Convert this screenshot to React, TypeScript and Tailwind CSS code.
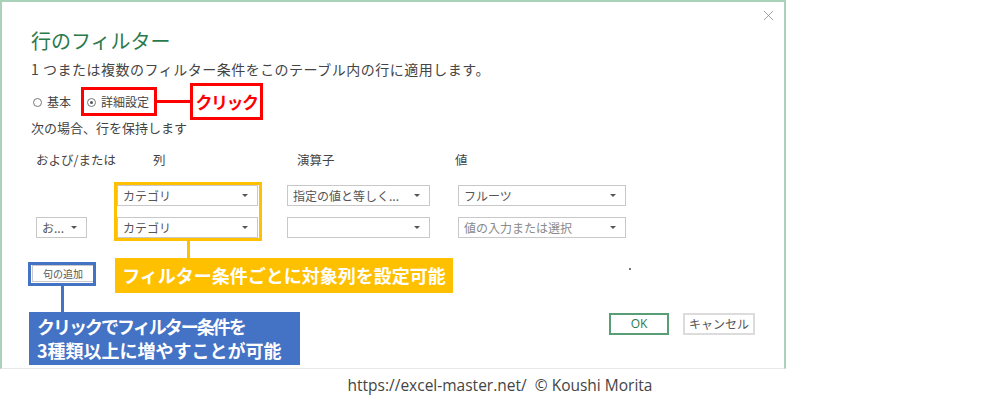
import { X } from 'lucide-react';

const jp = { fontFamily: '"Noto Sans CJK JP", "Noto Sans", sans-serif' };

const Caret = () => (
  <span className="w-0 h-0 border-l-[3px] border-r-[3px] border-t-[3px] border-l-transparent border-r-transparent border-t-[#555]" />
);

const Select = ({ text, width, muted }: { text?: string; width: string; muted?: boolean }) => (
  <div className={`${width} h-[21px] border border-[#c8c8c8] bg-white flex items-center justify-between pl-[5px] pr-[9px] text-[12px] ${muted ? 'text-[#8a8a8a]' : 'text-[#555]'}`}>
    <span className="leading-none whitespace-nowrap">{text}</span>
    <Caret />
  </div>
);

const Radio = ({ label, checked }: { label: string; checked?: boolean }) => (
  <div className="flex items-center gap-[5px]">
    <span className="w-[9px] h-[9px] rounded-full border border-[#777] flex items-center justify-center">
      {checked && <span className="w-[3px] h-[3px] rounded-full bg-[#555]" />}
    </span>
    <span>{label}</span>
  </div>
);

const App = () => {
  return (
    <div className="relative w-[1000px] h-[398px] bg-white text-[#444]" style={jp}>
      {/* dialog */}
      <div className="w-[786px] h-[369px] border-t-2 border-l-2 border-r-2 border-[#a9d3b9] border-b border-b-[#e8e8e8] flex flex-col">
        <div className="flex justify-end pr-[7px] pt-[5px] h-[14px]">
          <X className="w-[17px] h-[17px] text-[#888]" strokeWidth={1.1} />
        </div>
        <div className="pl-[29px] flex flex-col">
          <div className="mt-[11px] text-[20px] leading-[28px] text-[#2b7a4b]">行のフィルター</div>
          <div className="mt-[4px] text-[14px] leading-[20px] tracking-[0.5px]">1 つまたは複数のフィルター条件をこのテーブル内の行に適用します。</div>
          <div className="mt-[13px] flex items-center gap-[16px] text-[12px] leading-[20px] pl-[2px]">
            <Radio label="基本" />
            <Radio label="詳細設定" checked />
          </div>
          <div className="mt-[6px] text-[13px] leading-[20px]">次の場合、行を保持します</div>

          <div className="mt-[12px] grid grid-cols-[81px_170px_171px_1fr] pl-[5px] text-[12.5px] leading-[20px]">
            <div>および/または</div>
            <div className="pl-[36px]">列</div>
            <div className="pl-[10px]">演算子</div>
            <div className="-ml-[3px]">値</div>
          </div>

          <div className="mt-[15px] grid grid-cols-[81px_170px_171px_1fr] pl-[5px]">
            <div />
            <Select text="カテゴリ" width="w-[141px]" />
            <Select text="指定の値と等しく..." width="w-[143px]" />
            <Select text="フルーツ" width="w-[168px]" />
          </div>
          <div className="mt-[11px] grid grid-cols-[81px_170px_171px_1fr] pl-[5px]">
            <Select text="お..." width="w-[51px]" />
            <Select text="カテゴリ" width="w-[141px]" />
            <Select width="w-[143px]" />
            <Select text="値の入力または選択" width="w-[168px]" muted />
          </div>

          <div className="mt-[27px] flex items-start">
            <div className="ml-[1px] w-[62px] h-[17px] border border-[#c8c8c8] flex items-center justify-center text-[10px] text-[#555]">句の追加</div>
            <span className="ml-[535px] mt-[3px] w-[2px] h-[2px] bg-[#777]" />
          </div>

          <div className="mt-[31px] flex justify-end gap-[14px] pr-[29px]">
            <div className="w-[60px] h-[22px] border-2 border-[#5a9e78] flex items-center justify-center text-[12px] text-[#2b7a4b]" style={{ fontFamily: '"Open Sans", sans-serif' }}>OK</div>
            <div className="w-[72px] h-[22px] border-2 border-[#dcdcdc] flex items-center justify-center text-[12px] text-[#555]">キャンセル</div>
          </div>
        </div>
      </div>

      {/* footer */}
      <div className="flex justify-center pt-[6px] text-[15.5px] text-[#444] leading-[20px]" style={{ fontFamily: '"Open Sans", sans-serif' }}>
        https://excel-master.net/&nbsp;&nbsp;© Koushi Morita
      </div>

      {/* annotation: click */}
      <div className="absolute left-[81px] top-[87px] w-[76px] h-[29px] border-[3px] border-[#ff0000]" />
      <div className="absolute left-[157px] top-[100px] w-[33px] h-[3px] bg-[#ff0000]" />
      <div className="absolute left-[190px] top-[83px] w-[73px] h-[37px] border-[3px] border-[#ff0000] bg-white flex items-center justify-center text-[17px] font-bold text-[#ff0000] tracking-[-1.5px]">クリック</div>

      {/* annotation: yellow */}
      <div className="absolute left-[114px] top-[182px] w-[148px] h-[59px] border-[3px] border-[#ffc000]" />
      <div className="absolute left-[187px] top-[241px] w-[3px] h-[17px] bg-[#ffc000]" />
      <div className="absolute left-[115px] top-[258px] w-[338px] h-[35px] bg-[#ffc000] flex items-center justify-center text-[18px] font-bold text-white">フィルター条件ごとに対象列を設定可能</div>

      {/* annotation: blue */}
      <div className="absolute left-[28px] top-[262px] w-[68px] h-[24px] border-[3px] border-[#4472c4]" />
      <div className="absolute left-[61px] top-[286px] w-[3px] h-[26px] bg-[#4472c4]" />
      <div className="absolute left-[29px] top-[312px] w-[271px] h-[53px] bg-[#4472c4] px-[8px] pt-[2px] text-[18px] leading-[24px] font-bold text-white">
        <div className="tracking-[-2px]">クリックでフィルター条件を</div>
        <div>3種類以上に増やすことが可能</div>
      </div>
    </div>
  );
};

export default App;
